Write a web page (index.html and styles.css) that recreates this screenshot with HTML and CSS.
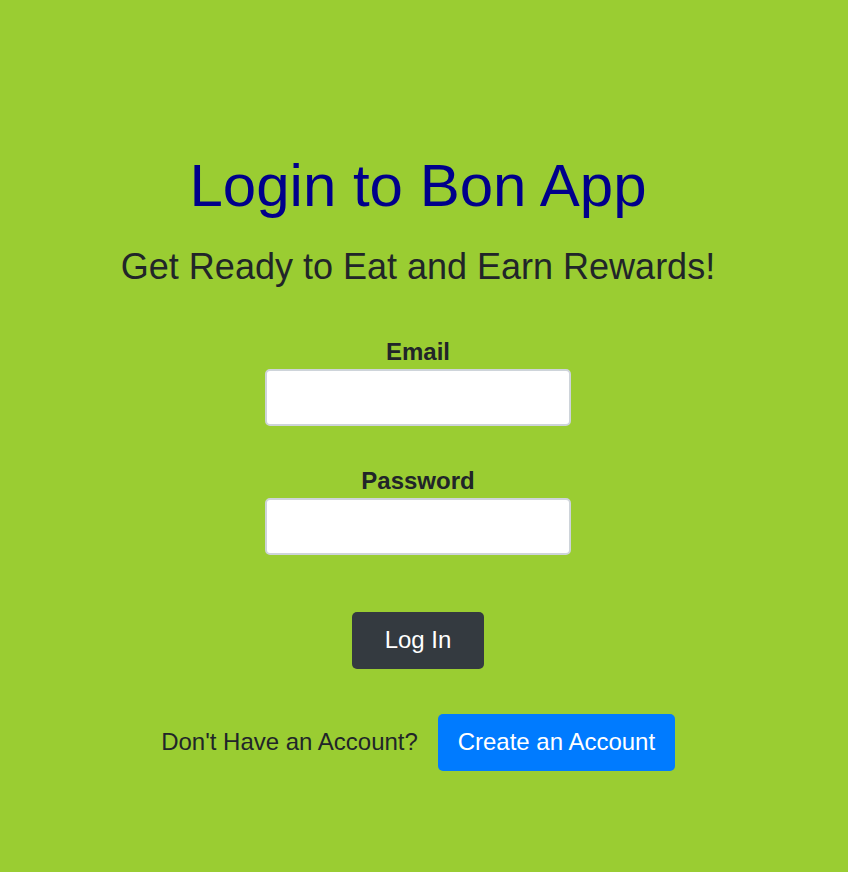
FILE: index.html
```html
<!DOCTYPE html>
<html lang="en">
<head>
<meta charset="utf-8">
<title>Login to Bon App</title>
<link rel="stylesheet" href="styles.css">
</head>
<body>
<main class="page">
  <h1 class="title">Login to Bon App</h1>
  <h2 class="subtitle">Get Ready to Eat and Earn Rewards!</h2>
  <form class="login-form">
    <div class="field">
      <label class="label" for="email">Email</label>
      <input class="input" id="email" type="email">
    </div>
    <div class="field field-password">
      <label class="label" for="password">Password</label>
      <input class="input" id="password" type="password">
    </div>
    <button class="btn btn-dark" type="button">Log In</button>
  </form>
  <div class="signup">
    <span class="signup-text">Don't Have an Account?</span>
    <button class="btn btn-primary" type="button">Create an Account</button>
  </div>
</main>
</body>
</html>
```
FILE: styles.css
```css
* { box-sizing: border-box; }
html, body {
  margin: 0;
  padding: 0;
  height: 100%;
}
body {
  background: #9acd32;
  font-family: "Liberation Sans", Arial, sans-serif;
  color: #212529;
}
.page {
  display: flex;
  flex-direction: column;
  align-items: center;
  padding: 150px 12px 0 0;
}
.title {
  margin: 0;
  font-size: 60px;
  font-weight: 400;
  line-height: 1.2;
  color: #00008b;
}
.subtitle {
  margin: 23px 0 0;
  font-size: 36px;
  font-weight: 400;
  line-height: 1.2;
  color: #212529;
}
.login-form {
  display: flex;
  flex-direction: column;
  align-items: center;
  margin-top: 50px;
}
.field {
  display: flex;
  flex-direction: column;
  align-items: center;
  gap: 2px;
}
.field-password {
  margin-top: 41px;
}
.label {
  font-size: 24px;
  font-weight: 700;
  line-height: 1.2;
}
.input {
  width: 306px;
  height: 57px;
  border: 2px solid #ced4da;
  border-radius: 5px;
  background: #fff;
  font-size: 20px;
}
.btn {
  font-family: "Liberation Sans", Arial, sans-serif;
  font-size: 24px;
  line-height: 1;
  height: 57px;
  border: none;
  border-radius: 5px;
  color: #fff;
  cursor: pointer;
}
.btn-dark {
  background: #343a40;
  width: 132px;
  margin-top: 57px;
}
.btn-primary {
  background: #007bff;
  width: 237px;
}
.signup {
  display: flex;
  align-items: center;
  gap: 20px;
  margin-top: 45px;
}
.signup-text {
  font-size: 24px;
}
```
